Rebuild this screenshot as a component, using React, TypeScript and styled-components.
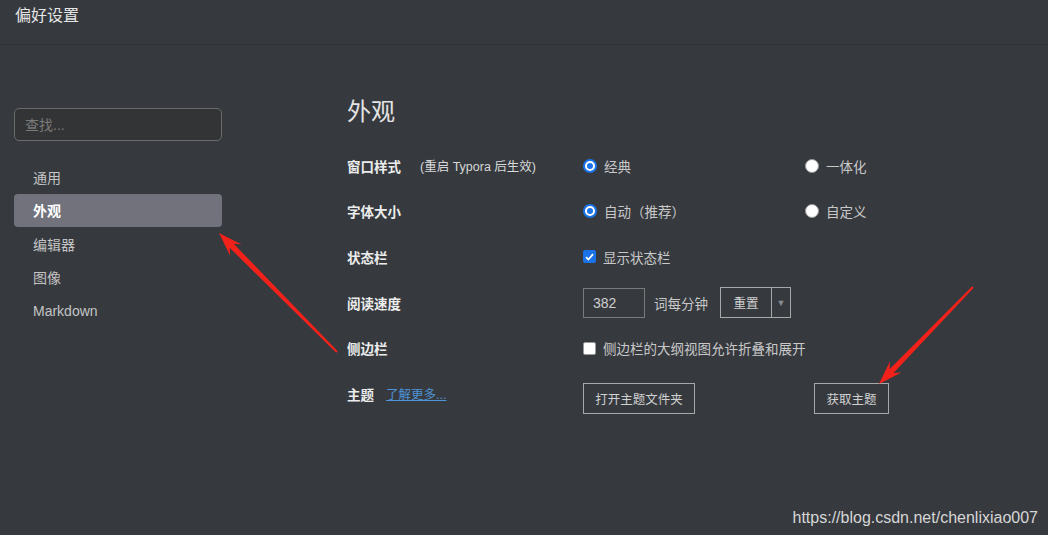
import styled, {createGlobalStyle} from 'styled-components';

const GlobalStyle = createGlobalStyle`
  html, body {
    margin: 0;
    padding: 0;
    background: #363a3f;
  }

  body {
    font-family: "Liberation Sans", "Noto Sans CJK SC", sans-serif;
    color: #d4d4d4;
  }
`;

const Page = styled.div`
  position: relative;
  display: flex;
  flex-direction: column;
  height: 535px;
  overflow: hidden;
  background: #363a3f;
`;

const Header = styled.header`
  height: 45px;
  flex-shrink: 0;
  box-sizing: border-box;
  padding: 6px 0 0 15px;
  border-bottom: 1px solid #2f3236;
  font-size: 16px;
  line-height: 20px;
  color: #e6e6e6;
`;

const Main = styled.div`
  display: flex;
  flex: 1;
`;

const Sidebar = styled.aside`
  width: 208px;
  padding: 63px 0 0 14px;
  flex-shrink: 0;
`;

const Search = styled.input`
  display: block;
  width: 208px;
  height: 33px;
  box-sizing: border-box;
  padding: 0 10px;
  border: 1px solid #6b6b6b;
  border-radius: 5px;
  background: #333436;
  color: #ccc;
  font: 14px "Liberation Sans", "Noto Sans CJK SC", sans-serif;
  outline: none;

  &::placeholder {
    color: #7a7a7a;
  }
`;

const NavList = styled.nav`
  display: flex;
  flex-direction: column;
  margin-top: 19px;
`;

const NavItem = styled.div<{ $active?: boolean }>`
  height: 33.5px;
  display: flex;
  align-items: center;
  padding-left: 19px;
  border-radius: 4px;
  font-size: 14px;
  font-weight: ${p => p.$active ? 700 : 400};
  color: ${p => p.$active ? '#ffffff' : '#c4c4c4'};
  background: ${p => p.$active ? '#71727c' : 'transparent'};
`;

const Content = styled.section`
  flex: 1;
  padding: 51px 0 0 125px;
`;

const Heading = styled.h2`
  margin: 0 0 15px;
  font-size: 24px;
  line-height: 32px;
  font-weight: 400;
  color: #e4e4e4;
`;

const Row = styled.div`
  display: flex;
  align-items: center;
  height: 45.6px;
`;

const LabelCell = styled.div`
  width: 236px;
  flex-shrink: 0;
  display: flex;
  align-items: center;
`;

const Label = styled.span`
  font-size: 13.5px;
  font-weight: 700;
  color: #ececec;
`;

const Note = styled.span`
  margin-left: 19px;
  font-size: 12.5px;
  color: #d8d8d8;
`;

const Link = styled.a`
  margin-left: 12px;
  font-size: 12.5px;
  color: #4f94d8;
  text-decoration: underline;
`;

const OptionCell = styled.div<{ $width?: number }>`
  width: ${p => p.$width ?? 222}px;
  flex-shrink: 0;
  display: flex;
  align-items: center;
`;

const Option = styled.label`
  display: flex;
  align-items: center;
  gap: 7px;
  font-size: 13.5px;
  color: #c8c8c8;
`;

const Radio = styled.span<{ $checked?: boolean }>`
  width: 14px;
  height: 14px;
  box-sizing: border-box;
  border-radius: 50%;
  background: #ffffff;
  border: ${p => p.$checked ? '2px solid #1a73e8' : '1px solid #9a9a9a'};
  display: flex;
  align-items: center;
  justify-content: center;

  &::after {
    content: '';
    display: ${p => p.$checked ? 'block' : 'none'};
    width: 6px;
    height: 6px;
    border-radius: 50%;
    background: #1a73e8;
  }
`;

const Check = styled.span<{ $checked?: boolean }>`
  width: 13px;
  height: 13px;
  box-sizing: border-box;
  border-radius: 2px;
  background: ${p => p.$checked ? '#1a73e8' : '#ffffff'};
  border: 1px solid ${p => p.$checked ? '#1a73e8' : '#9a9a9a'};
  display: flex;
  align-items: center;
  justify-content: center;
`;

const NumberBox = styled.div`
  width: 62px;
  height: 30px;
  box-sizing: border-box;
  border: 1px solid #7a7a7a;
  padding-left: 9px;
  display: flex;
  align-items: center;
  font-size: 14px;
  color: #cfcfcf;
`;

const Unit = styled.span`
  margin-left: 9px;
  font-size: 13.5px;
  color: #c8c8c8;
`;

const SplitButton = styled.div`
  margin-left: 12px;
  display: flex;
  height: 31px;
  box-sizing: border-box;
  border: 1px solid #a8a8a8;
`;

const SplitMain = styled.span`
  width: 50px;
  display: flex;
  align-items: center;
  justify-content: center;
  border-right: 1px solid #a8a8a8;
  font-size: 12.5px;
  color: #d0d0d0;
`;

const SplitCaret = styled.span`
  width: 18px;
  display: flex;
  align-items: center;
  justify-content: center;
  font-size: 9px;
  color: #8a8a8a;
`;

const ActionButton = styled.button<{ $width: number }>`
  width: ${p => p.$width}px;
  height: 31px;
  margin-top: 9px;
  background: transparent;
  border: 1px solid #a8a8a8;
  color: #d0d0d0;
  font: 12.5px "Liberation Sans", "Noto Sans CJK SC", sans-serif;
  padding: 0;
`;

const Footer = styled.div`
  flex-shrink: 0;
  display: flex;
  justify-content: flex-end;
  padding: 0 10px 8px 0;
  font: 16px "Liberation Sans", sans-serif;
  color: #d6d6d6;
`;

const Overlay = styled.svg`
  position: absolute;
  inset: 0;
  pointer-events: none;
`;

const CheckMark = () => (
  <svg width="9" height="8" viewBox="0 0 9 8">
    <path d="M1 4.2 L3.4 6.5 L8 1.2" fill="none" stroke="#fff" strokeWidth="1.8"/>
  </svg>
);

const navItems = ['通用', '外观', '编辑器', '图像', 'Markdown'];

const App = () => {
  return (
    <Page>
      <GlobalStyle/>
      <Header>偏好设置</Header>
      <Main>
        <Sidebar>
          <Search placeholder="查找..."/>
          <NavList>
            {navItems.map(item => (
              <NavItem key={item} $active={item === '外观'}>{item}</NavItem>
            ))}
          </NavList>
        </Sidebar>
        <Content>
          <Heading>外观</Heading>
          <Row>
            <LabelCell>
              <Label>窗口样式</Label>
              <Note>(重启 Typora 后生效)</Note>
            </LabelCell>
            <OptionCell>
              <Option><Radio $checked/>经典</Option>
            </OptionCell>
            <OptionCell>
              <Option><Radio/>一体化</Option>
            </OptionCell>
          </Row>
          <Row>
            <LabelCell><Label>字体大小</Label></LabelCell>
            <OptionCell>
              <Option><Radio $checked/>自动（推荐）</Option>
            </OptionCell>
            <OptionCell>
              <Option><Radio/>自定义</Option>
            </OptionCell>
          </Row>
          <Row>
            <LabelCell><Label>状态栏</Label></LabelCell>
            <OptionCell $width={300}>
              <Option><Check $checked><CheckMark/></Check>显示状态栏</Option>
            </OptionCell>
          </Row>
          <Row>
            <LabelCell><Label>阅读速度</Label></LabelCell>
            <OptionCell $width={300}>
              <NumberBox>382</NumberBox>
              <Unit>词每分钟</Unit>
              <SplitButton>
                <SplitMain>重置</SplitMain>
                <SplitCaret>▼</SplitCaret>
              </SplitButton>
            </OptionCell>
          </Row>
          <Row>
            <LabelCell><Label>侧边栏</Label></LabelCell>
            <OptionCell $width={300}>
              <Option><Check/>侧边栏的大纲视图允许折叠和展开</Option>
            </OptionCell>
          </Row>
          <Row>
            <LabelCell>
              <Label>主题</Label>
              <Link>了解更多...</Link>
            </LabelCell>
            <OptionCell $width={231}>
              <ActionButton $width={112}>打开主题文件夹</ActionButton>
            </OptionCell>
            <OptionCell>
              <ActionButton $width={75}>获取主题</ActionButton>
            </OptionCell>
          </Row>
        </Content>
      </Main>
      <Footer>https://blog.csdn.net/chenlixiao007</Footer>
      <Overlay width="1048" height="535" viewBox="0 0 1048 535">
        <polygon fill="#f2221a"
                 points="219,233 230.2,255.7 229.7,247.8 336.3,352.7 337.7,351.3 233.7,243.8 241.6,244.4"/>
        <polygon fill="#f2221a"
                 points="879,384 901.4,372.4 893.5,373.1 973.7,287.7 972.3,286.3 889.5,369.2 890.0,361.2"/>
      </Overlay>
    </Page>
  );
};

export default App;
